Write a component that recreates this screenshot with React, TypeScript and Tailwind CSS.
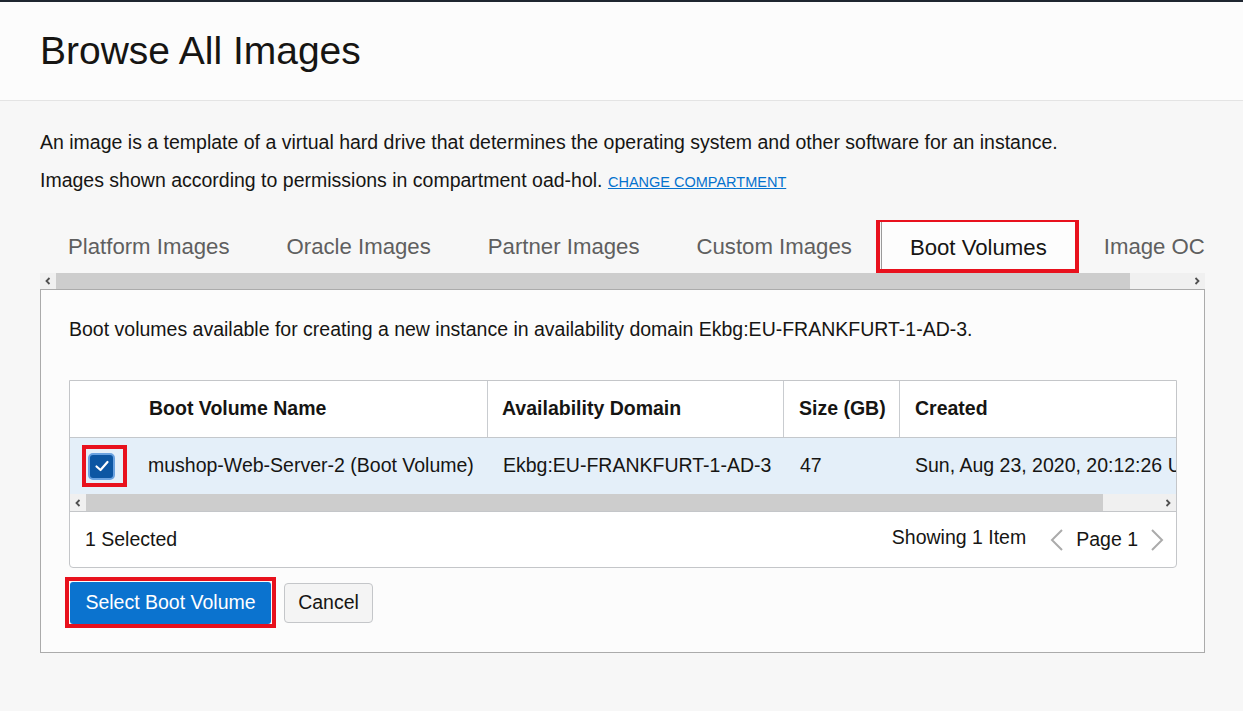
import React from 'react';

const tabs = ['Platform Images', 'Oracle Images', 'Partner Images', 'Custom Images', 'Boot Volumes', 'Image OCIDs'];

function ScrollArrow({ dir }: { dir: 'left' | 'right' }) {
  return (
    <svg width="8" height="8" viewBox="0 0 8 8" className="text-[#505050]">
      {dir === 'left' ? (
        <polyline points="5.5,1 2.5,4 5.5,7" fill="none" stroke="currentColor" strokeWidth="1.8" />
      ) : (
        <polyline points="2.5,1 5.5,4 2.5,7" fill="none" stroke="currentColor" strokeWidth="1.8" />
      )}
    </svg>
  );
}

function PageChevron({ dir }: { dir: 'left' | 'right' }) {
  return (
    <svg width="16" height="24" viewBox="0 0 16 24" className="text-[#ababab]">
      {dir === 'left' ? (
        <polyline points="13,2 3,12 13,22" fill="none" stroke="currentColor" strokeWidth="2" />
      ) : (
        <polyline points="3,2 13,12 3,22" fill="none" stroke="currentColor" strokeWidth="2" />
      )}
    </svg>
  );
}

export default function App() {
  return (
    <div className="w-full h-[711px] overflow-hidden bg-[#f7f7f7] font-['Liberation_Sans',Arial,sans-serif] text-[#161513] border-t-2 border-[#1f2630]">
      {/* Page header */}
      <div className="h-[99px] bg-[#fcfcfc] border-b border-[#e4e4e4] px-[40px] flex items-center">
        <h1 className="text-[39px] leading-none pb-[1px]">Browse All Images</h1>
      </div>

      <div className="px-[40px] pt-[22px]">
        <p className="text-[19.5px] leading-[38px] whitespace-nowrap">
          An image is a template of a virtual hard drive that determines the operating system and other software for an instance.
        </p>
        <p className="text-[19.5px] leading-[38px] whitespace-nowrap">
          Images shown according to permissions in compartment oad-hol.{' '}
          <a className="text-[14.5px] text-[#0572ce] underline">CHANGE COMPARTMENT</a>
        </p>

        {/* Tabs */}
        <div className="mt-[19px] w-[1165px] h-[53px] overflow-hidden">
          <div className="flex h-full whitespace-nowrap">
            {tabs.map((t) => {
              const active = t === 'Boot Volumes';
              return (
                <div
                  key={t}
                  className={`relative flex items-center pl-[28px] pr-[29px] text-[22.2px] ${
                    active ? 'bg-[#fdfdfd] text-[#161513] border-l border-[#9a9a9a] mt-[2px]' : 'text-[#5f5f5f]'
                  }`}
                >
                  {t}
                  {active && <span className="absolute left-[-6px] right-[-3px] top-[-4px] bottom-[0px] border-[4px] border-[#e8111d]" />}
                </div>
              );
            })}
          </div>
        </div>

        {/* Tab scroller */}
        <div className="w-[1165px] h-[16px] flex bg-[#f0f0f0]">
          <div className="w-[16px] flex items-center justify-center"><ScrollArrow dir="left" /></div>
          <div className="w-[1074px] bg-[#cdcdcd]" />
          <div className="flex-1" />
          <div className="w-[17px] flex items-center justify-center"><ScrollArrow dir="right" /></div>
        </div>

        {/* Panel */}
        <div className="w-[1165px] h-[364px] bg-[#fcfcfc] border border-[#ababab] px-[28px] pt-[27px]">
          <p className="text-[19.5px] leading-[24px]">
            Boot volumes available for creating a new instance in availability domain Ekbg:EU-FRANKFURT-1-AD-3.
          </p>

          <div className="mt-[39px] w-[1108px] border border-[#c4c6c9] rounded-b-[4px] bg-white overflow-hidden">
            <div className="overflow-hidden">
              <div className="w-[1300px]">
                {/* Header row */}
                <div className="flex h-[57px] text-[19.5px] font-bold border-b border-[#c4c8cc] bg-white">
                  <div className="w-[62px]" />
                  <div className="w-[356px] flex items-center pl-[17px] border-r border-[#c9ccd0]">Boot Volume Name</div>
                  <div className="w-[296px] flex items-center pl-[14px] border-r border-[#c9ccd0]">Availability Domain</div>
                  <div className="w-[116px] flex items-center pl-[15px] border-r border-[#c9ccd0]">Size (GB)</div>
                  <div className="flex-1 flex items-center pl-[15px]">Created</div>
                </div>
                {/* Data row */}
                <div className="flex h-[56px] text-[19.5px] bg-[#e4eff9]">
                  <div className="w-[62px] flex items-center pl-[18px]">
                    <div className="relative">
                      <div className="w-[27px] h-[27px] rounded-[5px] bg-[#0c56a3] border-[2px] border-[#6aa2e0] flex items-center justify-center">
                        <svg width="16" height="16" viewBox="0 0 16 16">
                          <polyline points="2.5,8.5 6.5,12 13.5,4" fill="none" stroke="white" strokeWidth="2.2" strokeLinecap="round" strokeLinejoin="round" />
                        </svg>
                      </div>
                      <span className="absolute left-[-6px] top-[-8px] w-[45px] h-[42px] border-[4px] border-[#e8111d]" />
                    </div>
                  </div>
                  <div className="w-[356px] flex items-center pl-[16px] whitespace-nowrap">mushop-Web-Server-2 (Boot Volume)</div>
                  <div className="w-[296px] flex items-center pl-[15px] whitespace-nowrap">Ekbg:EU-FRANKFURT-1-AD-3</div>
                  <div className="w-[116px] flex items-center pl-[16px]">47</div>
                  <div className="flex-1 flex items-center pl-[15px] whitespace-nowrap">Sun, Aug 23, 2020, 20:12:26 UTC</div>
                </div>
              </div>
            </div>
            {/* Horizontal scrollbar */}
            <div className="h-[17px] flex bg-[#f0f0f0]">
              <div className="w-[16px] flex items-center justify-center"><ScrollArrow dir="left" /></div>
              <div className="w-[1017px] bg-[#cdcdcd]" />
              <div className="flex-1" />
              <div className="w-[16px] flex items-center justify-center"><ScrollArrow dir="right" /></div>
            </div>
            {/* Footer */}
            <div className="h-[56px] flex items-center border-t border-[#c4c6c9] text-[19.5px] pl-[15px] pr-[11px]">
              <span>1 Selected</span>
              <span className="ml-auto -mt-[4px]">Showing 1 Item</span>
              <div className="flex items-center ml-[23px]">
                <PageChevron dir="left" />
                <span className="mx-[11px]">Page 1</span>
                <PageChevron dir="right" />
              </div>
            </div>
          </div>

          {/* Buttons */}
          <div className="flex items-center mt-[14px] ml-[1px] gap-[13px]">
            <div className="relative">
              <button className="w-[201px] h-[42px] bg-[#0b73cf] text-white text-[19.5px] rounded-[3px]">Select Boot Volume</button>
              <span className="absolute left-[-5px] right-[-5px] top-[-5px] bottom-[-4px] border-[4px] border-[#e8111d]" />
            </div>
            <button className="w-[89px] h-[40px] bg-[#f4f4f4] border border-[#c4c6c9] rounded-[4px] text-[19.5px] text-[#161513]">Cancel</button>
          </div>
        </div>
      </div>
    </div>
  );
}
